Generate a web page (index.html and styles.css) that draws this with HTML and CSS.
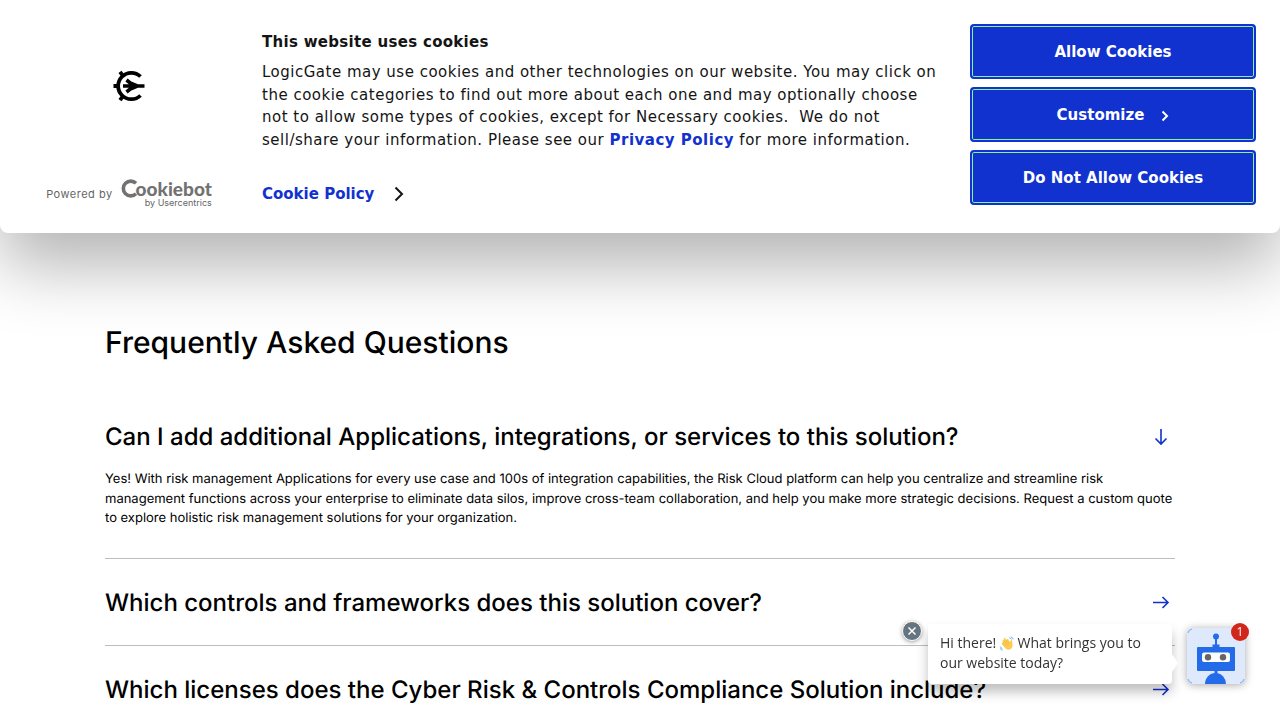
FILE: index.html
```html
<!DOCTYPE html>
<html lang="en">
<head>
<meta charset="utf-8">
<title>Frequently Asked Questions</title>
<link rel="stylesheet" href="styles.css">
</head>
<body>
<section class="cookie-banner" aria-label="This website uses cookies">
  <div class="brand">
    <svg class="brand-logo" width="32" height="32" viewBox="0 0 32 32" fill="none" stroke="#000" aria-label="LogicGate">
      <path d="M27.500 6.500A13.200 13.200 0 1 0 27.500 25.500" stroke-width="3.800"/>
      <path d="M.5 16h5M7 1.800l3 4M7 30.200l3-4" stroke-width="3.800"/>
      <path d="M10 16h14M13.500 10l7.500 6-7.500 6" stroke-width="3.600"/>
      <path d="M18.500 11.500l6.500 2.700h6.500v3.600H25l-6.500 2.700z" fill="#000" stroke="none"/>
    </svg>
    <a class="powered" href="#">
      <span class="powered-label">Powered by</span>
      <span class="cookiebot"><span class="cookiebot-name"><svg class="cookiebot-c" width="18" height="19" viewBox="0 0 18 19" fill="none" stroke="#727272" stroke-width="3.600" aria-label="C"><path d="M15 4.300A7.400 7.400 0 1 0 15 14.700"/></svg>ookiebot</span><span class="cookiebot-by">by Usercentrics</span></span>
    </a>
  </div>
  <div class="cookie-copy">
    <h2 class="cookie-title">This website uses cookies</h2>
    <p class="cookie-text">LogicGate may use cookies and other technologies on our website. You may click on the cookie categories to find out more about each one and may optionally choose not to allow some types of cookies, except for Necessary cookies.&nbsp; We do not sell/share your information. Please see our <a class="text-link" href="#">Privacy Policy</a> for more information.</p>
    <a class="policy-link" href="#">Cookie Policy
      <svg width="10" height="16" viewBox="0 0 10 16" fill="none" stroke="#141414" stroke-width="2" aria-hidden="true"><path d="M1.500 1.500L8 8l-6.500 6.500"/></svg>
    </a>
  </div>
  <div class="cookie-actions">
    <button class="cookie-button" type="button">Allow Cookies</button>
    <button class="cookie-button" type="button">Customize
      <svg class="button-chevron" width="8" height="12" viewBox="0 0 8 12" fill="none" stroke="#fff" stroke-width="2" aria-hidden="true"><path d="M1.500 1.500L6 6l-4.500 4.500"/></svg>
    </button>
    <button class="cookie-button" type="button">Do Not Allow Cookies</button>
  </div>
</section>

<main class="faq">
  <h1 class="faq-title">Frequently Asked Questions</h1>
  <section class="faq-item">
    <h3 class="faq-heading"><button class="faq-toggle" type="button" aria-expanded="true">Can I add additional Applications, integrations, or services to this solution?
      <svg class="faq-arrow" width="18" height="18" viewBox="0 0 18 18" fill="none" stroke="#1132cf" stroke-width="1.600" aria-hidden="true"><path d="M9 1v15M3.500 10.500L9 16l5.500-5.500"/></svg></button></h3>
    <p class="faq-answer">Yes! With risk management Applications for every use case and 100s of integration capabilities, the Risk Cloud platform can help you centralize and streamline risk management functions across your enterprise to eliminate data silos, improve cross-team collaboration, and help you make more strategic decisions. Request a custom quote to explore holistic risk management solutions for your organization.</p>
  </section>
  <section class="faq-item">
    <h3 class="faq-heading"><button class="faq-toggle" type="button" aria-expanded="false">Which controls and frameworks does this solution cover?
      <svg class="faq-arrow" width="18" height="18" viewBox="0 0 18 18" fill="none" stroke="#1132cf" stroke-width="1.600" aria-hidden="true"><path d="M1 8.500h15M10.500 3L16 8.500 10.500 14"/></svg></button></h3>
  </section>
  <section class="faq-item">
    <h3 class="faq-heading"><button class="faq-toggle" type="button" aria-expanded="false">Which licenses does the Cyber Risk &amp; Controls Compliance Solution include?
      <svg class="faq-arrow" width="18" height="18" viewBox="0 0 18 18" fill="none" stroke="#1132cf" stroke-width="1.600" aria-hidden="true"><path d="M1 8.500h15M10.500 3L16 8.500 10.500 14"/></svg></button></h3>
  </section>
</main>

<aside class="chat">
  <div class="chat-bubble">
    <button class="chat-close" type="button" aria-label="Close message"><svg width="10" height="10" viewBox="0 0 10 10" stroke="#fff" stroke-width="1.500" aria-hidden="true"><path d="M1.500 1.500l7 7M8.500 1.500l-7 7"/></svg></button>
    Hi there! <svg class="wave" width="14" height="15" viewBox="0 0 16 16" aria-label="waving hand"><path d="M3.200 4.200c.6-.7 1.400-.3 1.800.2L4.400 3c-.4-1 .9-1.800 1.600-.9l1.700 2.200C7.300 3 8.800 2.300 9.500 3.300l2 3.200c.2-1 .3-2.600 1.400-2.600 1.300 0 .9 2 1.200 3.500.7 3.100.2 6-2.400 7.200-2.500 1.100-4.800.1-6.200-1.700L2 8.600c-.5-.8.400-1.700 1.200-1.200L2.900 5.800c-.2-.6-.1-1.200.3-1.600z" fill="#fccb52"/><path d="M3.500 7.600l3 3M4.500 5l4 4.500M7 4l3.500 4.500" stroke="#eda630" stroke-width=".6" fill="none"/><path d="M10.500 1.500q2 .2 3 2M12.500.5q2 .7 2.800 2.600M.7 11.500q.3 2 2.200 2.700M0 13.300q.7 2 2.700 2.400" fill="none" stroke="#5eb0e5"/></svg> What brings you to our website today?
  </div>
  <button class="chat-launcher" type="button" aria-label="Open chat">
    <svg class="robot" width="58" height="56" viewBox="0 0 58 56" aria-hidden="true"><path d="M1 5a5 5 0 0 1 4-4M57 51a5 5 0 0 1-4 4M1 51a5 5 0 0 0 4 4" fill="none" stroke="#7ba6f0"/><g fill="#246bea"><circle cx="29" cy="8.500" r="3"/><path d="M28 10h2v8h-2zM25.500 16.500h7V20h-7zM27.500 42h3v5h-3z"/><rect x="10" y="19" width="38" height="24" rx="1"/><path d="M18 56a10.500 11 0 0 1 21 0z"/></g><rect x="15" y="24.500" width="28" height="9.500" rx="2" fill="#fff"/><circle cx="21" cy="29.300" r="3.200" fill="#666"/><circle cx="36" cy="29.300" r="3.200" fill="#666"/></svg>
    <span class="chat-count">1</span>
  </button>
</aside>
</body>
</html>
```
FILE: styles.css
```css
* { box-sizing: border-box; }
body {
  margin: 0;
  background: #fff;
  color: #000;
  font-family: Inter, sans-serif;
}
button { font: inherit; cursor: pointer; }
a { text-decoration: none; }
h1, h2, h3, p { margin: 0; }

.cookie-banner {
  position: relative;
  display: flex;
  padding: 24px;
  border-radius: 0 0 8px 8px;
  background: #fff;
  box-shadow: 0 32px 68px rgba(0, 0, 0, 0.3);
  color: #141414;
  font-family: "DejaVu Sans", sans-serif;
  font-size: 15px;
}
.brand {
  flex: 0 0 210px;
  display: flex;
  flex-direction: column;
  justify-content: space-between;
  align-items: center;
  padding: 46px 0 1px;
}
.powered {
  display: flex;
  align-items: center;
  gap: 8px;
  color: #666;
  font-family: Inter, sans-serif;
}
.powered-label { font-size: 11px; letter-spacing: 0.5px; }
.cookiebot { display: flex; flex-direction: column; align-items: flex-end; }
.cookiebot-name {
  display: flex;
  align-items: center;
  color: #727272;
  font-family: Lato, sans-serif;
  font-size: 19px;
  font-weight: 900;
  line-height: 18px;
}
.cookiebot-c { margin-right: -3px; }
.cookiebot-by { font-size: 9px; line-height: 10px; }

.cookie-copy { flex: 1; padding: 6px 28px 3px; }
.cookie-title { font-size: 15px; line-height: 24px; letter-spacing: 0.02em; }
.cookie-text { margin-top: 7px; line-height: 1.5; letter-spacing: 0.5px; }
.text-link { color: #1132cf; font-weight: 700; }
.policy-link {
  display: inline-flex;
  align-items: center;
  gap: 20px;
  margin-top: 31px;
  color: #1132cf;
  font-weight: 700;
  line-height: 24px;
}

.cookie-actions {
  flex: 0 0 286px;
  display: flex;
  flex-direction: column;
  gap: 8px;
}
.cookie-button {
  display: flex;
  align-items: center;
  justify-content: center;
  gap: 17px;
  height: 55px;
  border: 2px solid #1132cf;
  border-radius: 4px;
  background: #1132cf;
  box-shadow: inset 0 0 0 1px #87f5a5;
  color: #fff;
  font-weight: 700;
}
.button-chevron { margin-top: 3px; }

.faq {
  max-width: 1070px;
  margin: 0 auto;
  padding-top: 90px;
  text-rendering: geometricPrecision;
}
.faq-title { font-size: 30px; font-weight: 500; line-height: 40px; }
.faq-item { border-bottom: 1px solid #bdbdbd; padding: 27px 0 25px; }
.faq-title + .faq-item { padding: 57px 0 29px; }
.faq-heading { font-size: 24px; font-weight: 500; line-height: 34px; }
.faq-toggle {
  display: flex;
  align-items: center;
  justify-content: space-between;
  width: 100%;
  padding: 0 5px 0 0;
  border: 0;
  background: none;
  color: inherit;
  text-align: left;
  text-rendering: inherit;
}
.faq-answer { margin-top: 16px; font-size: 13px; line-height: 1.5; }

.chat {
  position: fixed;
  right: 35px;
  bottom: 36px;
  display: flex;
  align-items: flex-end;
  gap: 15px;
}
.chat-bubble {
  position: relative;
  width: 244px;
  padding: 9px 12px 11px;
  border-radius: 4px;
  background: #fff;
  box-shadow: 0 8px 12px rgba(0, 0, 0, 0.25);
  color: #333;
  font: 14px/20px "Open Sans", sans-serif;
}
.chat-bubble::after {
  content: "";
  position: absolute;
  left: 100%;
  top: 30px;
  border: solid transparent;
  border-width: 9px 0 9px 6px;
  border-left-color: #fff;
}
.wave { vertical-align: -3px; }
.chat-close {
  position: absolute;
  top: -3px;
  left: -26px;
  display: grid;
  place-items: center;
  width: 20px;
  height: 20px;
  padding: 0;
  border: 1px solid #fff;
  border-radius: 50%;
  background: #657481;
  box-shadow: 0 1px 4px rgba(0, 0, 0, 0.4);
}
.chat-launcher {
  position: relative;
  width: 58px;
  height: 56px;
  padding: 0;
  border: 0;
  border-radius: 6px;
  background: #dfe9fc;
  box-shadow: 0 1px 8px rgba(0, 0, 0, 0.35);
}
.robot { display: block; }
.chat-count {
  position: absolute;
  top: -5px;
  right: -4px;
  width: 18px;
  height: 18px;
  border-radius: 50%;
  background: #d1261b;
  color: #fff;
  font: 12px/18px "Open Sans", sans-serif;
}
```
